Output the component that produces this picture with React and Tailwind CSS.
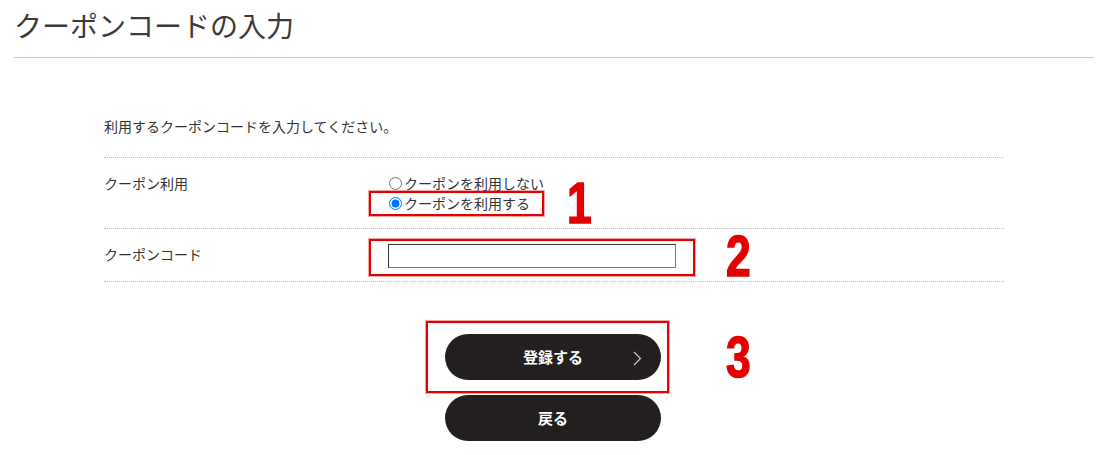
import React from 'react';

const jp = { fontFamily: '"Noto Sans CJK JP", "Noto Sans", sans-serif' };

const Marker = ({ n, className }) => (
    <span
        className={`absolute block text-[57px] leading-none font-bold text-[#e30000] scale-x-[0.78] origin-left [-webkit-text-stroke:1.5px_#e30000] ${className}`}
        style={{ fontFamily: '"Liberation Sans", Arial, sans-serif' }}
    >
        {n}
    </span>
);

const App = () => {
    return (
        <div className="relative w-full h-[455px] bg-white text-[#333] overflow-hidden" style={jp}>
            <div className="mx-[14px] w-[1080px] border-b border-[#cccccc] pt-[4px] pb-[11px]">
                <h1 className="text-[28px] leading-[42px] font-normal text-[#3a3a3a]">クーポンコードの入力</h1>
            </div>

            <div className="ml-[104px] w-[900px]">
                <p className="mt-[58px] text-[14px] leading-[20px]">利用するクーポンコードを入力してください。</p>

                <div className="mt-[21px] border-t border-dotted border-[#bbbbbb]">
                    <div className="flex py-[15px]">
                        <div className="w-[284px] text-[14px] leading-[20px]">クーポン利用</div>
                        <div className="flex flex-col text-[14px] leading-[20px]">
                            <label className="flex items-center">
                                <input type="radio" name="coupon" className="m-0 ml-[1px] mr-[2px] w-[13px] h-[13px]" />
                                <span>クーポンを利用しない</span>
                            </label>
                            <label className="flex items-center">
                                <input type="radio" name="coupon" defaultChecked className="m-0 ml-[1px] mr-[2px] w-[13px] h-[13px]" />
                                <span>クーポンを利用する</span>
                            </label>
                        </div>
                    </div>
                </div>

                <div className="border-t border-dotted border-[#bbbbbb]">
                    <div className="flex items-start pt-[15px] pb-[13px]">
                        <div className="w-[284px] text-[14px] leading-[20px]">クーポンコード</div>
                        <input
                            type="text"
                            className="w-[288px] h-[24px] border border-[#767676] border-t-[#333] border-l-[#333] bg-white outline-none"
                        />
                    </div>
                </div>
                <div className="border-t border-dotted border-[#bbbbbb]" />

                <div className="mt-[52px] flex flex-col items-center gap-[15px] pr-[2px]">
                    <button className="relative w-[216px] h-[46px] rounded-full bg-[#231f20] text-white text-[15px] font-bold">
                        登録する
                        <svg className="absolute right-[19px] top-[17px]" width="9" height="15" viewBox="0 0 9 15" fill="none">
                            <path d="M1 1l6.5 6.5L1 14" stroke="#d0d0d0" strokeWidth="1.1" />
                        </svg>
                    </button>
                    <button className="w-[216px] h-[46px] rounded-full bg-[#231f20] text-white text-[15px] font-bold">
                        戻る
                    </button>
                </div>
            </div>

            {/* annotation frames */}
            <div className="absolute left-[369px] top-[191px] w-[175px] h-[25px] border-2 border-[#e30000] shadow-[0_0_0_1px_rgba(230,0,0,0.35)]" />
            <div className="absolute left-[369px] top-[239px] w-[326px] h-[37px] border-2 border-[#e30000] shadow-[0_0_0_1px_rgba(230,0,0,0.35)]" />
            <div className="absolute left-[426px] top-[321px] w-[243px] h-[72px] border-2 border-[#e30000] shadow-[0_0_0_1px_rgba(230,0,0,0.35)]" />

            <Marker n="1" className="left-[567px] top-[175px]" />
            <Marker n="2" className="left-[726px] top-[228px]" />
            <Marker n="3" className="left-[726px] top-[329px]" />
        </div>
    );
};

export default App;
